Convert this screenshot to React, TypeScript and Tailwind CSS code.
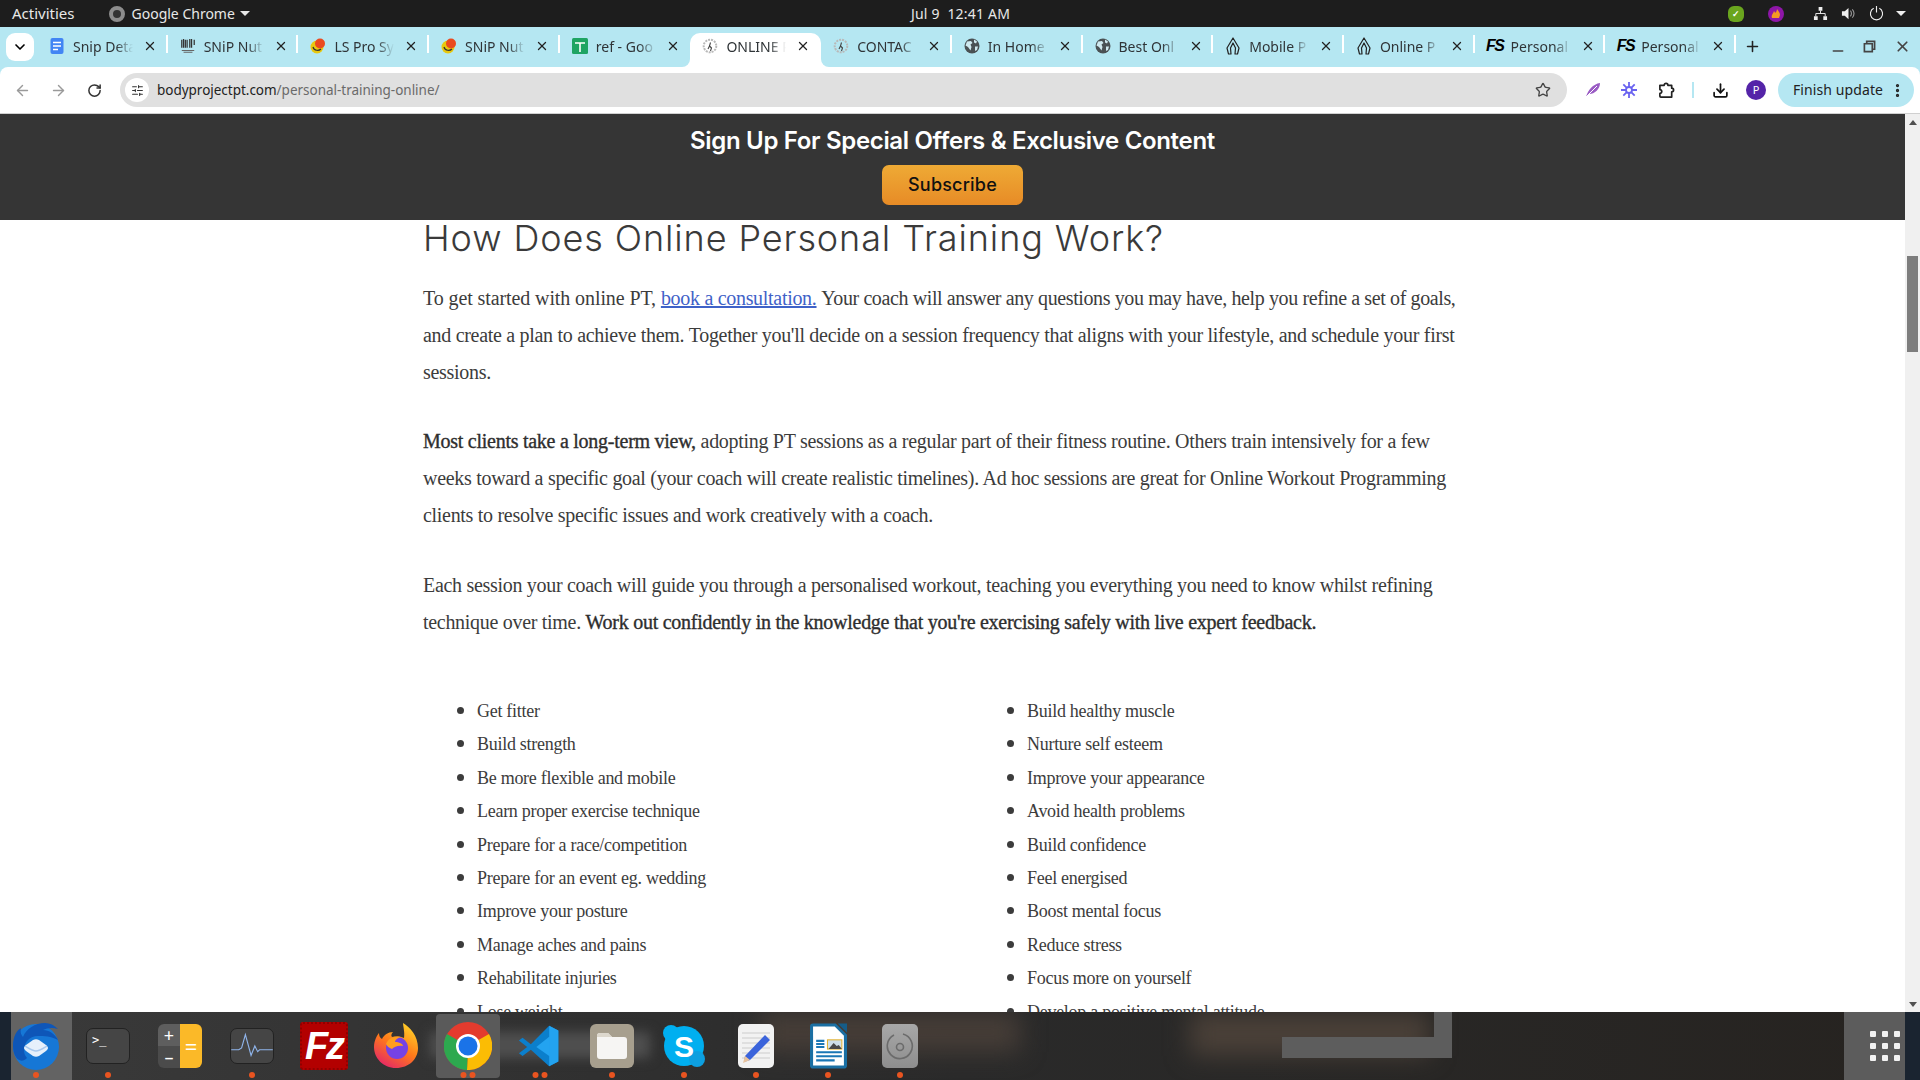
import type { ReactNode } from 'react';
import { ArrowLeft, ArrowRight, ChevronDown, Download, EllipsisVertical, Minus, Plus, RotateCw, SlidersHorizontal, Star, X } from 'lucide-react';

const uiFont = "font-['Noto_Sans',sans-serif]";
const bodyFont = "font-['Liberation_Serif',serif]";
const headFont = "font-['Inter',sans-serif]";
const strongText = 'font-normal tracking-[-0.26px] text-[#2e2e2e] [-webkit-text-stroke:0.35px_#2e2e2e]';

function DocsIcon() {
  return (
    <svg viewBox="0 0 16 16" className="h-4 w-4">
      <rect x="1.5" y="0" width="13" height="16" rx="2" fill="#4285f4" />
      <path d="M4 4.5h8M4 8h8M4 11.5h5" stroke="#fff" strokeWidth="1.6" />
    </svg>
  );
}

function SnipIcon() {
  return (
    <svg viewBox="0 0 18 18" className="h-[18px] w-[18px]">
      <path d="M2 2v9M4 1v10M6 2v9M8 2v9M11 1v10M13 1v10M16 2v6" stroke="#333" strokeWidth="1.4" />
      <path d="M2 14h14M4 16h10" stroke="#666" strokeWidth="1.2" />
    </svg>
  );
}

function LsIcon() {
  return (
    <svg viewBox="0 0 16 16" className="h-4 w-4">
      <circle cx="7" cy="9" r="6.5" fill="#e8c80f" />
      <path d="M3 9c1 4 6 4 8 2" fill="none" stroke="#333" strokeWidth="1.2" />
      <circle cx="10" cy="5.5" r="5" fill="#ea4a1f" />
    </svg>
  );
}

function SheetsIcon() {
  return (
    <svg viewBox="0 0 16 16" className="h-4 w-4">
      <rect width="16" height="16" rx="1.5" fill="#1fa463" />
      <path d="M3 5h10M8 5v9" stroke="#fff" strokeWidth="1.6" />
    </svg>
  );
}

function RunnerIcon() {
  return (
    <svg viewBox="0 0 16 16" className="h-4 w-4">
      <circle cx="8" cy="8" r="6.3" fill="none" stroke="#b9b9b9" strokeWidth="2" strokeDasharray="2 1" />
      <path d="M8.5 4.5 7.5 8l2 2-1 3M7.5 8 6 11" fill="none" stroke="#444" strokeWidth="1.1" />
    </svg>
  );
}

function GlobeIcon() {
  return (
    <svg viewBox="0 0 16 16" className="h-4 w-4">
      <circle cx="8" cy="8" r="7.5" fill="#4a5154" />
      <path d="M3 3.5 7 3l1.5 2-2 1.5L7.5 9l-1 3.5L4 9 1.5 7.5zM10 1.5l3 2-1 2-2-1zM11 8.5h3l-1 3.5-2 1z" fill="#cfe9ef" />
    </svg>
  );
}

function ArchIcon() {
  return (
    <svg viewBox="0 0 16 18" className="h-[18px] w-4">
      <path d="M8 1 2 11l1.5 6h2.500l-.5-6L8 6l2.500 5-.5 6h2.500l1.500-6z" fill="none" stroke="#222" strokeWidth="1.2" strokeLinejoin="round" />
    </svg>
  );
}

function FsIcon() {
  return <span className="-ml-[1px] w-4 font-['Liberation_Sans',sans-serif] text-[16px] leading-none font-bold tracking-[-1.5px] text-black italic">FS</span>;
}

const tabs: { title: string; icon: ReactNode; active?: boolean }[] = [
  { title: 'Snip Deta', icon: <DocsIcon /> },
  { title: 'SNiP Nut', icon: <SnipIcon /> },
  { title: 'LS Pro Sy', icon: <LsIcon /> },
  { title: 'SNiP Nut', icon: <LsIcon /> },
  { title: 'ref - Goo', icon: <SheetsIcon /> },
  { title: 'ONLINE P', icon: <RunnerIcon />, active: true },
  { title: 'CONTAC', icon: <RunnerIcon /> },
  { title: 'In Home', icon: <GlobeIcon /> },
  { title: 'Best Onl', icon: <GlobeIcon /> },
  { title: 'Mobile P', icon: <ArchIcon /> },
  { title: 'Online P', icon: <ArchIcon /> },
  { title: 'Personal', icon: <FsIcon /> },
  { title: 'Personal', icon: <FsIcon /> },
];

function TopBar() {
  return (
    <div className={`relative flex h-[27px] items-center bg-[#1d1d1d] text-[14px] text-[#e8e8e8] ${uiFont}`}>
      <span className="ml-3 text-[15px]">Activities</span>
      <span className="ml-[34px] h-4 w-4 rounded-full border-[4px] border-[#8d8d8d] bg-[#333]" />
      <span className="ml-[7px]">Google Chrome</span>
      <span className="ml-[5px] border-x-[5px] border-t-[5px] border-x-transparent border-t-[#e8e8e8]" />
      <span className="absolute left-[911px] tracking-[0.2px] whitespace-pre">Jul 9  12:41 AM</span>
      <div className="ml-auto flex items-center">
        <span className="flex h-4 w-4 items-center justify-center rounded-[6px] bg-[#6aa51e] text-[9px] font-bold text-white">✓</span>
        <svg viewBox="0 0 16 16" className="ml-6 h-4 w-4">
          <circle cx="8" cy="8" r="8" fill="#8e16a8" />
          <path d="M4 12c-1-3 1-4 2-7 1 1 1 2 1 2 1-1 2-2 2-4 1 2 3 3 3 6l-1 3z" fill="#f59a23" />
        </svg>
        <svg viewBox="0 0 16 16" className="ml-[29px] h-[15px] w-[15px]" fill="#eee">
          <path d="M6 1h4v4H6zM1 11h4v4H1zM11 11h4v4h-4z" />
          <path d="M8 5v3M3 11V8h10v3" stroke="#eee" fill="none" />
        </svg>
        <svg viewBox="0 0 16 16" className="ml-[13px] h-[15px] w-[15px]" fill="#eee">
          <path d="M1 5.500h3L8 2v12L4 10.500H1z" />
          <path d="M10 5c1.500 1.500 1.500 4.500 0 6M12 3.500c2.500 2.500 2.500 6.500 0 9" fill="none" stroke="#999" strokeWidth="1.2" />
        </svg>
        <svg viewBox="0 0 16 16" className="ml-[13px] h-[15px] w-[15px]" fill="none" stroke="#eee" strokeWidth="1.2">
          <path d="M5 2.500a6.500 6.500 0 1 0 6 0M8 0v7" />
        </svg>
        <span className="mr-[14px] ml-[12px] border-x-[5px] border-t-[5px] border-x-transparent border-t-[#eee]" />
      </div>
    </div>
  );
}

function TabStrip() {
  return (
    <div className={`flex h-[40px] items-end pl-[6px] text-[14px] text-[#2f3437] ${uiFont}`}>
      <div className="mb-[6px] mr-[3px] flex h-[28px] w-[28px] items-center justify-center rounded-[9px] bg-white">
        <ChevronDown className="h-4 w-4 text-black" strokeWidth={2.5} />
      </div>
      {tabs.map((tab, i) => (
        <div key={i} className={`relative flex h-[34px] w-[130.7px] shrink-0 items-center pb-[8px] pl-3 ${tab.active ? 'rounded-t-[10px] bg-white' : ''}`}>
          <span className="flex w-4 shrink-0 justify-center">{tab.icon}</span>
          <span className="ml-2 w-[60px] shrink-0 overflow-hidden whitespace-nowrap [mask-image:linear-gradient(to_right,black_72%,transparent)]">{tab.title}</span>
          <X className="ml-[10px] h-[14px] w-[14px] shrink-0 text-[#222]" strokeWidth={2.2} />
          {!tab.active && i !== 4 && <span className="absolute right-0 top-[2px] h-[18px] w-[2px] bg-white" />}
          {tab.active && (
            <span className="absolute -right-2 bottom-0 h-2 w-2 bg-white">
              <span className="block h-2 w-2 rounded-bl-[8px] bg-[#b5e7f2]" />
            </span>
          )}
          {tab.active && (
            <span className="absolute -left-2 bottom-0 h-2 w-2 bg-white">
              <span className="block h-2 w-2 rounded-br-[8px] bg-[#b5e7f2]" />
            </span>
          )}
        </div>
      ))}
      <Plus className="mb-[12px] ml-[8px] h-[17px] w-[17px] text-[#222]" strokeWidth={2.2} />
      <div className="mb-[12px] ml-auto flex items-center">
        <Minus className="h-4 w-4 translate-y-[4px] text-[#444]" strokeWidth={2.4} />
        <svg viewBox="0 0 14 14" className="ml-[17px] h-[13px] w-[13px]" fill="none" stroke="#444" strokeWidth="1.800">
          <path d="M4 4V1.500h8.500V10H10M1.500 4H10v8.500H1.500z" />
        </svg>
        <X className="ml-[18px] mr-[9px] h-[17px] w-[17px] text-[#444]" strokeWidth={2.4} />
      </div>
    </div>
  );
}

function Toolbar() {
  return (
    <div className={`flex h-[47px] items-center rounded-t-[8px] border-b border-[#d0d0d0] bg-white pl-1 ${uiFont}`}>
      <span className="flex w-9 justify-center"><ArrowLeft className="h-[17px] w-[17px] text-[#9a9a9a]" strokeWidth={2} /></span>
      <span className="flex w-9 justify-center"><ArrowRight className="h-[17px] w-[17px] text-[#9a9a9a]" strokeWidth={2} /></span>
      <span className="flex w-9 justify-center"><RotateCw className="h-[15px] w-[15px] text-[#333]" strokeWidth={2.4} /></span>
      <div className="ml-2 flex h-[34px] flex-1 items-center rounded-full bg-[#e0e0e0] pl-[5px]">
        <span className="flex h-6 w-6 items-center justify-center rounded-full bg-white">
          <SlidersHorizontal className="h-[13px] w-[13px] text-[#333]" strokeWidth={2} />
        </span>
        <span className="ml-[8px] text-[13.500px] tracking-[-0.02px] text-[#6a6a6a]">
          <span className="text-[#222]">bodyprojectpt.com</span>/personal-training-online/
        </span>
        <Star className="ml-auto mr-[16px] h-4 w-4 text-[#444]" strokeWidth={2} />
      </div>
      <span className="ml-2 flex w-9 justify-center">
        <svg viewBox="0 0 16 16" className="h-4 w-4"><path d="M1 15C3 8 8 2 15 1c0 6-5 11-11 11z" fill="#9a5cc4" /><path d="M1 15 12 4" stroke="#fff" /></svg>
      </span>
      <span className="flex w-9 justify-center">
        <svg viewBox="0 0 16 16" className="h-4 w-4" fill="none" stroke="#6a63f0" strokeWidth="1.800">
          <circle cx="8" cy="8" r="3" />
          <path d="M8 0v5M8 11v5M0 8h5M11 8h5M2.300 2.300l3.500 3.500M10.200 10.200l3.500 3.500M13.700 2.300l-3.500 3.500M5.800 10.200l-3.500 3.500" />
        </svg>
      </span>
      <span className="ml-px flex w-9 justify-center">
        <svg viewBox="0 0 18 18" className="h-[17px] w-[17px]" fill="none" stroke="#222" strokeWidth="1.800" strokeLinejoin="round">
          <path d="M2 3.500h4.500a2 2 0 0 1 4 0H14.500V6.500a2 2 0 0 1 0 4v5.500H3a1 1 0 0 1-1-1v-3a2 2 0 0 0 0-4z" />
        </svg>
      </span>
      <span className="ml-[8px] h-[16px] w-[2px] bg-[#b5e7f2]" />
      <span className="ml-[8px] flex w-9 justify-center"><Download className="h-[17px] w-[17px] text-[#111]" strokeWidth={2.4} /></span>
      <span className="flex w-9 justify-center">
        <span className="flex h-5 w-5 items-center justify-center rounded-full bg-[#5424a8] text-[11px] text-white">P</span>
      </span>
      <div className="ml-1 mr-[6px] flex h-[34px] w-[136px] items-center rounded-full bg-[#b5e7f2] pb-[2px] pl-[15px] text-[14px] tracking-[0.1px] text-[#222]">
        Finish update
        <EllipsisVertical className="ml-auto mr-[8px] h-[17px] w-[17px] translate-y-[1px] text-[#222]" strokeWidth={2.6} />
      </div>
    </div>
  );
}

const leftList = ['Get fitter', 'Build strength', 'Be more flexible and mobile', 'Learn proper exercise technique', 'Prepare for a race/competition', 'Prepare for an event eg. wedding', 'Improve your posture', 'Manage aches and pains', 'Rehabilitate injuries', 'Lose weight'];
const rightList = ['Build healthy muscle', 'Nurture self esteem', 'Improve your appearance', 'Avoid health problems', 'Build confidence', 'Feel energised', 'Boost mental focus', 'Reduce stress', 'Focus more on yourself', 'Develop a positive mental attitude'];

function BulletList({ items, className }: { items: string[]; className: string }) {
  return (
    <ul className={`list-disc marker:text-[22px] ${className}`}>
      {items.map((item) => (
        <li key={item} className="h-[33.4px] leading-[33.4px]">{item}</li>
      ))}
    </ul>
  );
}

function Article() {
  return (
    <div className="flex-1 overflow-hidden bg-white">
      <div className={`ml-[423px] h-[36px] w-[1000px] whitespace-nowrap text-[36px] leading-[36px] font-light tracking-[0.9px] text-[#3a3a3a] ${headFont}`}>
        How Does Online Personal Training Work?
      </div>
      <div className={`ml-[423px] w-[1100px] text-[20px] tracking-[-0.3px] text-[#3c3c3c] ${bodyFont}`}>
        <p className="mt-[24px] leading-[37px]">
          <span className="tracking-[-0.1px]">To get started with online PT, </span><a className="text-[#3f62c8] underline">book a consultation.</a> <span className="tracking-[-0.39px]">Your coach will answer any questions you may have, help you refine a set of goals,</span><br />
          and create a plan to achieve them. Together you'll decide on a session frequency that aligns with your lifestyle, and schedule your first<br />
          sessions.
        </p>
        <p className="mt-[32px] leading-[37px]">
          <b className={strongText}>Most clients take a long-term view,</b> adopting PT sessions as a regular part of their fitness routine. Others train intensively for a few<br />
          weeks toward a specific goal (your coach will create realistic timelines). Ad hoc sessions are great for Online Workout Programming<br />
          clients to resolve specific issues and work creatively with a coach.
        </p>
        <p className="mt-[33px] leading-[37px]">
          Each session your coach will guide you through a personalised workout, teaching you everything you need to know whilst refining<br />
          technique over time. <b className={strongText}>Work out confidently in the knowledge that you're exercising safely with live expert feedback.</b>
        </p>
        <div className="mt-[52px] flex text-[18px] tracking-[-0.28px]">
          <BulletList items={leftList} className="w-[550px] pl-[54px]" />
          <BulletList items={rightList} className="flex-1 pl-[54px]" />
        </div>
      </div>
    </div>
  );
}

function Scrollbar() {
  return (
    <div className="flex w-[15px] flex-col items-center bg-[#f0f0f0]">
      <span className="mt-[6px] border-x-[4px] border-b-[5px] border-x-transparent border-b-[#505050]" />
      <div className="mt-[131px] h-[96px] w-[11px] bg-[#7d7d7d]" />
      <span className="mt-auto mb-[5px] border-x-[4px] border-t-[5px] border-x-transparent border-t-[#505050]" />
    </div>
  );
}

function DockDots({ count }: { count: number }) {
  return (
    <span className="absolute bottom-[2px] left-1/2 flex -translate-x-1/2 gap-[3px]">
      {Array.from({ length: count }).map((_, i) => (
        <span key={i} className="h-[6px] w-[6px] rounded-full bg-[#e95420]" />
      ))}
    </span>
  );
}

const dockIcons: { dots: number; active?: boolean; node: ReactNode }[] = [
  {
    dots: 1,
    active: true,
    node: (
      <svg viewBox="0 0 48 48" className="h-[48px] w-[48px]">
        <circle cx="24" cy="25" r="23" fill="#1677d6" />
        <path d="M1 24C1 14 5 8 9 6c-1 4 0 7 2 9 3-8 12-14 22-14 5 0 9 2 13 6-6-2-11-1-15 1 6 0 12 4 15 10-7-4-14-4-20-4-8 0-14 6-14 14 0 3 1 6 3 8C8 43 1 35 1 24z" fill="#0e56b8" />
        <path d="M12 26c0-1 1-2 2-3l7-5c2-1 4-1 6 0l7 5c1 1 2 2 2 3s-1 2-2 3l-7 5c-2 1-4 1-6 0l-7-5c-1-1-2-2-2-3z" fill="#e6f0fb" />
        <path d="M13 24c5 3 8 5 11 5s6-2 11-5" fill="none" stroke="#a9c9ee" strokeWidth="1.500" />
      </svg>
    ),
  },
  {
    dots: 1,
    node: (
      <div className="h-[36px] w-[44px] rounded-[7px] border border-[#222] bg-[#454545] pl-[5px] pt-[2px] font-['DejaVu_Sans_Mono',monospace] text-[12px] leading-[18px] text-white">
        {'>_'}
      </div>
    ),
  },
  {
    dots: 0,
    node: (
      <div className="grid h-[44px] w-[44px] grid-cols-2 grid-rows-2 overflow-hidden rounded-[6px] text-[18px] leading-none text-white">
        <span className="flex items-center justify-center bg-[#5e5e5e]">+</span>
        <span className="row-span-2 flex items-center justify-center bg-[#fbb928] text-[22px]">=</span>
        <span className="flex items-center justify-center bg-[#4b4b4b]">–</span>
      </div>
    ),
  },
  {
    dots: 1,
    node: (
      <div className="h-[36px] w-[44px] overflow-hidden rounded-[7px] border border-[#222] bg-[#454545]">
        <svg viewBox="0 0 44 36" className="h-full w-full">
          <path d="M0 22h8l3-2 4-14 6 22 4-10 3 6 2-2h14" fill="none" stroke="#8fb4ea" strokeWidth="1.200" />
        </svg>
      </div>
    ),
  },
  {
    dots: 0,
    node: (
      <div className="flex h-[48px] w-[48px] items-center justify-center rounded-[3px] border-[2px] border-dotted border-[#8f0000] bg-[#b30000] font-['Liberation_Sans',sans-serif] text-[38px] font-bold tracking-[-2px] text-white italic">
        Fz
      </div>
    ),
  },
  {
    dots: 0,
    node: (
      <svg viewBox="0 0 48 48" className="h-[48px] w-[48px]">
        <defs>
          <linearGradient id="fx" x1="0.8" y1="0" x2="0.2" y2="1">
            <stop offset="0" stopColor="#ffd428" />
            <stop offset="0.5" stopColor="#ff7a1a" />
            <stop offset="1" stopColor="#e3226c" />
          </linearGradient>
        </defs>
        <path d="M24 46C11 46 2 36 2 25c0-6 3-12 5-14 0 3 1 5 3 6 2-4 6-7 11-7-2 2-2 4-1 5 6-1 10 0 12 1 1-6-1-12-1-15 7 4 15 13 15 25 0 11-9 20-22 20z" fill="url(#fx)" />
        <circle cx="25" cy="26" r="11" fill="#7542e5" />
        <path d="M14 22c2-6 9-9 15-7-4 1-6 3-6 5 4 0 8 2 8 4-5-1-9 1-11 3-3-1-5-3-6-5z" fill="#ff9d1e" />
      </svg>
    ),
  },
  {
    dots: 2,
    active: true,
    node: (
      <svg viewBox="0 0 48 48" className="h-[48px] w-[48px]">
        <circle cx="24" cy="24" r="24" fill="#e33b2e" />
        <path d="M24 24 45 12A24 24 0 0 1 23 48z" fill="#fbbc04" />
        <path d="M24 24 23 48A24 24 0 0 1 3 12z" fill="#2da94f" />
        <circle cx="24" cy="24" r="12" fill="#fff" />
        <circle cx="24" cy="24" r="9.500" fill="#1a73e8" />
      </svg>
    ),
  },
  {
    dots: 2,
    node: (
      <svg viewBox="0 0 48 48" className="h-[44px] w-[44px]">
        <path d="M34 2 14 22 5 15 1 18l9 7-9 7 4 3 9-7 20 18 10-5V7z" fill="#0b7fcc" />
        <path d="M34 2l10 5v34l-10 5zM34 14 20 25l14 10z" fill="#23a3f0" fillRule="evenodd" />
      </svg>
    ),
  },
  {
    dots: 1,
    node: (
      <div className="flex h-[44px] w-[44px] items-center justify-center rounded-[6px] bg-[#a79f8e]">
        <svg viewBox="0 0 32 28" className="h-[30px] w-[32px]">
          <path d="M1 4a3 3 0 0 1 3-3h8l4 4h12a3 3 0 0 1 3 3v16a3 3 0 0 1-3 3H4a3 3 0 0 1-3-3z" fill="#f6f5f3" />
          <path d="M1 4a3 3 0 0 1 3-3h8l4 4H1z" fill="#ddd8cd" />
        </svg>
      </div>
    ),
  },
  {
    dots: 1,
    node: (
      <div className="relative flex h-[40px] w-[40px] items-center justify-center rounded-full bg-[#00aff0] font-['Liberation_Sans',sans-serif] text-[30px] font-bold text-white">
        <span className="absolute -left-px -top-px h-4 w-4 rounded-full bg-[#00aff0]" />
        <span className="absolute -bottom-px -right-px h-4 w-4 rounded-full bg-[#0d9fe0]" />
        <span className="relative">S</span>
      </div>
    ),
  },
  {
    dots: 1,
    node: (
      <div className="h-[44px] w-[36px] overflow-hidden rounded-[5px] bg-[#f2f2f2]">
        <svg viewBox="0 0 36 44" className="h-full w-full">
          <path d="M4 9h28M4 14h28M4 19h28M4 24h28M4 29h28M4 34h28" stroke="#ccc" />
          <path d="M7 32 27 11l5 5-20 20-6 2z" fill="#3a63db" />
          <path d="M7 32l5 4-7 3z" fill="#e8c39e" />
        </svg>
      </div>
    ),
  },
  {
    dots: 1,
    node: (
      <svg viewBox="0 0 36 44" className="h-[46px] w-[37px]">
        <path d="M3 0h22l11 11v30a3 3 0 0 1-3 3H3a3 3 0 0 1-3-3V3a3 3 0 0 1 3-3z" fill="#1a6fa3" />
        <path d="M27 0h9v9z" fill="#155c88" />
        <path d="M3 3h21l9 9v29H3z" fill="#fff" />
        <path d="M6 17h8M6 20h8M6 23h8M6 28h25M6 32h25M6 36h18" stroke="#1a76b5" strokeWidth="2" />
        <rect x="17" y="16" width="14" height="9" fill="#cfe0ea" stroke="#e0b030" />
        <path d="M18 25l5-6 3 3 2-1 3 4z" fill="#4a4a4a" />
      </svg>
    ),
  },
  {
    dots: 1,
    node: (
      <div className="flex h-[44px] w-[36px] items-center justify-center rounded-[5px] bg-gradient-to-b from-[#a8a8a8] to-[#8e8e8e]">
        <svg viewBox="0 0 28 28" className="h-[28px] w-[28px]" fill="none" stroke="#6b6b6b" strokeWidth="1.600">
          <path d="M17 2a12.500 12.500 0 1 1-9 1" />
          <circle cx="14" cy="15" r="3.500" />
        </svg>
      </div>
    ),
  },
];

function Dock() {
  return (
    <div className="relative flex h-[68px] overflow-hidden bg-gradient-to-r from-[#3a3a3a] via-[#2a2a2a] to-[#262320]">
      <span className="absolute left-[430px] top-[20px] h-[26px] w-[220px] bg-[#4f4f4f] blur-[6px]" />
      <span className="absolute left-[760px] top-0 h-[40px] w-[260px] bg-[#463d37] blur-[12px]" />
      <span className="absolute left-[1190px] top-0 h-[44px] w-[240px] bg-[#4a4038] blur-[12px]" />
      <span className="absolute left-[1282px] top-0 h-[46px] w-[170px] border-r-[18px] border-b-[21px] border-[#5d5d5d] blur-[0.5px]" />
      <span className="absolute left-0 top-0 h-full w-[11px] bg-[#1a2430]" />
      <span className="absolute right-0 top-0 h-full w-[15px] bg-[#1a2430]" />
      <div className="relative flex">
        {dockIcons.map((icon, i) => (
          <div key={i} className="relative flex w-[72px] items-center justify-center">
            {icon.active && i === 0 && <span className="absolute inset-y-0 left-[11px] right-0 bg-[#636363]" />}
            {icon.active && i !== 0 && <span className="absolute inset-y-[2px] inset-x-1 rounded-[4px] bg-[#5a5a5a]" />}
            <span className="relative">{icon.node}</span>
            {icon.dots > 0 && <DockDots count={icon.dots} />}
          </div>
        ))}
      </div>
      <div className="absolute right-[15px] top-0 flex h-full w-[61px] items-center justify-end bg-[#5c5c5c] pr-[5px]">
        <div className="grid grid-cols-3 gap-x-[6px] gap-y-[6px]">
          {Array.from({ length: 9 }).map((_, i) => (
            <span key={i} className="h-[6px] w-[6px] rounded-[1px] bg-[#f2f2f2]" />
          ))}
        </div>
      </div>
    </div>
  );
}

export default function App() {
  return (
    <div className="flex h-[1080px] w-[1920px] flex-col overflow-hidden bg-white">
      <TopBar />
      <div className="bg-[#b5e7f2]">
        <TabStrip />
        <Toolbar />
      </div>
      <div className="flex min-h-0 flex-1">
        <div className="flex min-w-0 flex-1 flex-col">
          <div className="flex h-[106px] shrink-0 flex-col items-center bg-[#353535]">
            <h2 className={`mt-[12px] text-[24px] leading-[30px] font-semibold tracking-[-0.33px] text-white ${headFont}`}>Sign Up For Special Offers &amp; Exclusive Content</h2>
            <button className={`mt-[9px] h-[40px] w-[141px] rounded-[7px] bg-gradient-to-b from-[#eeaa35] to-[#e78b26] pb-[2px] text-[18px] font-medium tracking-[0.2px] text-[#111] ${headFont}`}>Subscribe</button>
          </div>
          <Article />
        </div>
        <Scrollbar />
      </div>
      <Dock />
    </div>
  );
}
